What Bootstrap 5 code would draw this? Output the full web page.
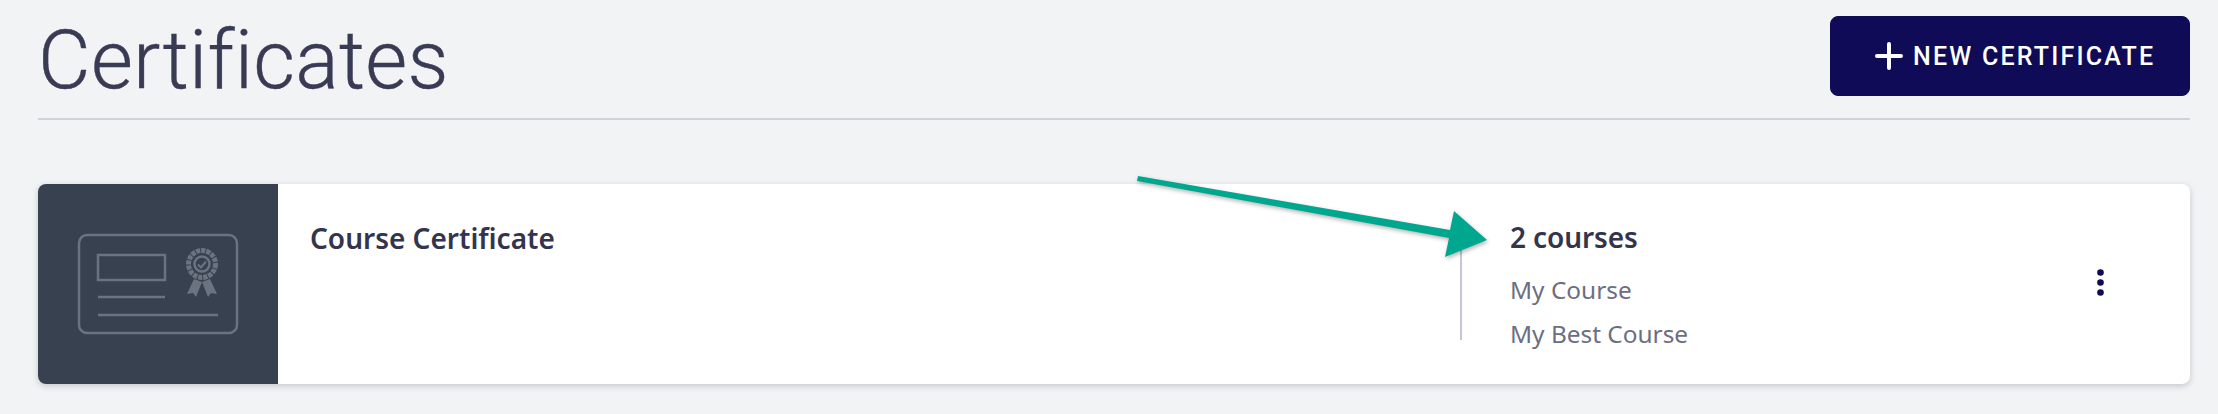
<!DOCTYPE html>
<html lang="en">
<head>
<meta charset="utf-8">
<title>Certificates</title>
<link href="https://cdn.jsdelivr.net/npm/bootstrap@5.3.0/dist/css/bootstrap.min.css" rel="stylesheet">
<style>
html,body{height:100%;}
body{background:#f2f3f5;overflow:hidden;font-family:"Noto Sans","Liberation Sans",sans-serif;color:#33344d;}
.page-wrap{padding:0 28px 0 38px;position:relative;height:414px;}
.head-row{height:120px;padding-top:16px;border-bottom:2px solid #cfd0d8;margin-bottom:64px;}
.page-title{font-family:Roboto,sans-serif;font-weight:300;font-size:81px;line-height:90px;letter-spacing:.3px;margin:0;color:#393b55;-webkit-text-stroke:.4px #393b55;}
.new-btn{width:360px;height:80px;background:#100b57;border-color:#100b57;border-radius:8px;color:#fff;font-family:Roboto,sans-serif;font-weight:500;font-size:25px;letter-spacing:2.2px;line-height:1;padding:0 0 0 44px;gap:10px;}
.new-btn:hover{background:#100b57;color:#fff;}
.cert-card{height:200px;border:0;border-radius:8px;box-shadow:0 2px 6px rgba(40,42,60,.22);overflow:hidden;}
.thumb-box{width:240px;background:#374150;}
.cert-name{padding:34px 0 0 32px;font-size:28px;font-weight:600;line-height:40px;color:#33344d;}
.course-col{width:600px;height:116px;margin-top:40px;border-left:2px solid #c6c7d4;padding-left:48px;}
.course-count{font-size:28px;font-weight:600;line-height:34px;margin-top:-4px;letter-spacing:-.1px;color:#33344d;}
.course-item{font-size:24.400px;line-height:44px;color:#6c6e82;}
.course-list{margin-top:14px;}
.kebab-col{width:130px;padding:85px 0 0 37px;}
.kebab-dots{display:block;}
.arrow-layer{position:absolute;left:0;top:0;pointer-events:none;filter:drop-shadow(1px 2px 2px rgba(0,0,0,.3));}
</style>
</head>
<body>
<div class="page-wrap">
  <div class="head-row d-flex justify-content-between align-items-start">
    <h1 class="page-title">Certificates</h1>
    <button type="button" class="btn new-btn d-flex align-items-center">
      <svg width="28" height="28" viewBox="0 0 28 28"><path d="M14 2v24M2 14h24" stroke="#fff" stroke-width="4" stroke-linecap="round" fill="none"/></svg>
      <span>NEW CERTIFICATE</span>
    </button>
  </div>
  <div class="card cert-card flex-row">
    <div class="thumb-box flex-shrink-0">
      <svg width="240" height="200" viewBox="0 0 240 200" fill="none" stroke="#6b7380" stroke-width="2.500">
        <rect x="41" y="51" width="158" height="98" rx="8"/>
        <rect x="60" y="71" width="67" height="25"/>
        <path d="M60 113h67M60 131h120"/>
        <circle cx="164" cy="80" r="13.500" stroke-width="5" stroke-dasharray="4.200 1"/>
        <circle cx="164" cy="80" r="7.500" stroke-width="2.500"/>
        <path d="M160 80.500l3 3 5-6" stroke-width="2"/>
        <path d="M156 95l-7 15 6-1 3 4 6-15zM172 95l7 15-6-1-3 4-6-15z" fill="#6b7380" stroke="none"/>
      </svg>
    </div>
    <div class="cert-name flex-grow-1">Course Certificate</div>
    <div class="course-col flex-shrink-0">
      <div class="course-count">2 courses</div>
      <div class="course-list">
        <div class="course-item">My Course</div>
        <div class="course-item">My Best Course</div>
      </div>
    </div>
    <div class="kebab-col flex-shrink-0">
      <svg class="kebab-dots" width="7" height="27" viewBox="0 0 7 27" fill="#100b57"><circle cx="3.500" cy="3.500" r="3.300"/><circle cx="3.500" cy="13.500" r="3.300"/><circle cx="3.500" cy="23.500" r="3.300"/></svg>
    </div>
  </div>
  <svg class="arrow-layer" width="2218" height="414" viewBox="0 0 2218 414">
    <path d="M1138 176L1450 230L1454 211L1487 240L1445 257L1449 238L1137 181Z" fill="#00a78f"/>
  </svg>
</div>
<script src="https://cdn.jsdelivr.net/npm/bootstrap@5.3.0/dist/js/bootstrap.bundle.min.js"></script>
</body>
</html>
